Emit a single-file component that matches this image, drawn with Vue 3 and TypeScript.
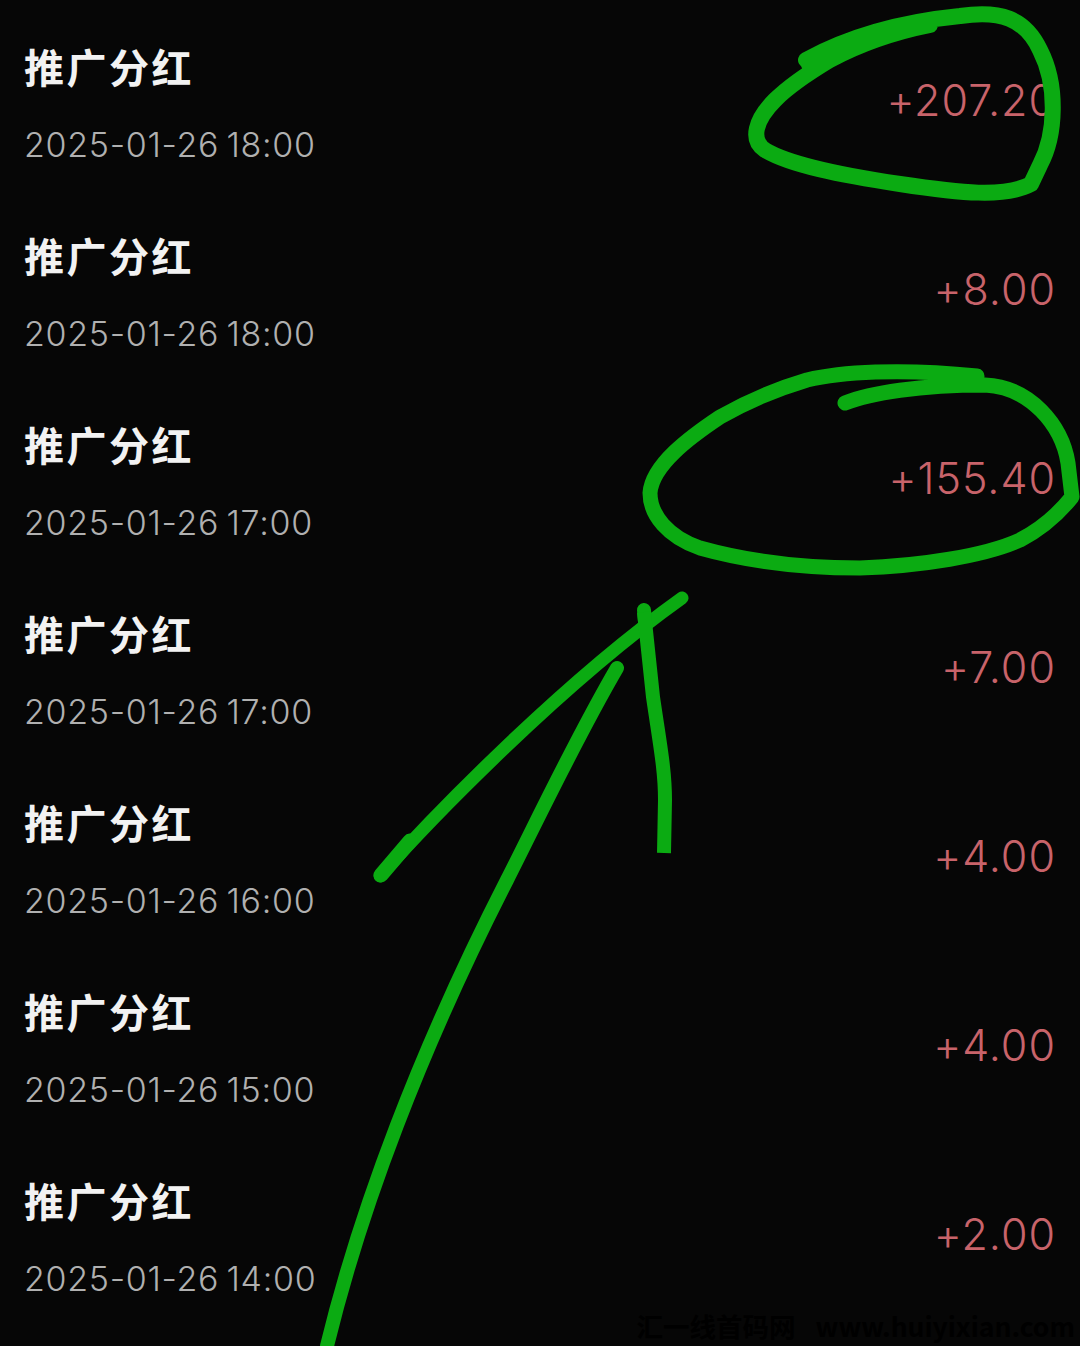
<script setup lang="ts">
type Row = {
  time: string
  amount: string
}

type Mark = {
  d: string
  width: number
  flat?: boolean
}

const rows: Row[] = [
  { time: '2025-01-26 18:00', amount: '+207.20' },
  { time: '2025-01-26 18:00', amount: '+8.00' },
  { time: '2025-01-26 17:00', amount: '+155.40' },
  { time: '2025-01-26 17:00', amount: '+7.00' },
  { time: '2025-01-26 16:00', amount: '+4.00' },
  { time: '2025-01-26 15:00', amount: '+4.00' },
  { time: '2025-01-26 14:00', amount: '+2.00' },
]

// hand drawn marks on top of the list
const marks: Mark[] = [
  { d: 'M808 65C835 46 880 29 930 25', width: 14 },
  {
    d: 'M806 60C850 36 900 22 960 16C1000 10 1025 18 1040 50C1058 85 1056 135 1040 165L1031 184C1005 198 960 193 900 184C840 175 790 165 765 150C750 140 755 120 775 100C790 85 810 72 830 60C860 44 895 32 930 25',
    width: 16,
  },
  {
    d: 'M845 403C870 393 920 385 985 385C1030 387 1062 425 1068 463L1072 497C1060 512 1045 527 1020 540C985 556 920 566 860 568C805 568 750 562 700 548C668 537 650 515 650 493C652 465 690 437 720 417C750 400 780 388 807 380C840 372 900 368 977 376',
    width: 15,
  },
  { d: 'M380 876C430 820 560 685 682 598', width: 13 },
  { d: 'M381 875L410 841', width: 15 },
  { d: 'M327 1346C360 1210 420 1050 507 880C535 825 575 740 617 668', width: 14 },
  { d: 'M644 610L645 622', width: 14 },
  { d: 'M644 612L653 697C660 745 665 770 665 800L664 853', width: 14, flat: true },
]
</script>

<template>
  <div class="screen">
    <ul class="list">
      <li v-for="(row, i) in rows" :key="i" class="row">
        <div class="info">
          <div class="title">推广分红</div>
          <div class="time">{{ row.time }}</div>
        </div>
        <div class="amount">{{ row.amount }}</div>
      </li>
    </ul>

    <svg class="marks" viewBox="0 0 1080 1346" width="1080" height="1346">
      <path
        v-for="(m, i) in marks"
        :key="i"
        :d="m.d"
        :stroke-width="m.width"
        :stroke-linecap="m.flat ? 'butt' : 'round'"
      />
    </svg>

    <div class="watermark">汇一线首码网 www.huiyixian.com</div>
  </div>
</template>

<style>
html,
body {
  margin: 0;
  background: #060606;
}
</style>

<style scoped>
.screen {
  position: relative;
  width: 1080px;
  height: 1346px;
  overflow: hidden;
  background: #060606;
  font-family: 'Inter', 'Noto Sans CJK SC', sans-serif;
}

.list {
  list-style: none;
  margin: 0;
  padding: 0 24px 0 24px;
}

.row {
  display: flex;
  justify-content: space-between;
  height: 189px;
  box-sizing: border-box;
  padding-top: 42px;
}

.title {
  height: 48px;
  font-family: 'Noto Sans CJK SC', sans-serif;
  font-size: 40px;
  line-height: 48px;
  font-weight: 700;
  letter-spacing: 2.5px;
  color: #f2f2f2;
}

.time {
  margin-top: 35px;
  font-size: 34px;
  line-height: 40px;
  font-weight: 300;
  letter-spacing: 0.7px;
  word-spacing: -3px;
  color: #b0b0b0;
}

.amount {
  margin-top: 34px;
  font-size: 43px;
  line-height: 48px;
  font-weight: 300;
  letter-spacing: 1px;
  color: #c8636a;
}

.marks {
  position: absolute;
  top: 0;
  left: 0;
  fill: none;
  stroke: #0bab12;
  stroke-linejoin: round;
}

.watermark {
  position: absolute;
  right: 5px;
  bottom: 4px;
  font-family: 'Noto Sans CJK SC', sans-serif;
  font-size: 26.5px;
  line-height: 32px;
  font-weight: 700;
  word-spacing: 14px;
  white-space: nowrap;
  color: #000;
}
</style>
